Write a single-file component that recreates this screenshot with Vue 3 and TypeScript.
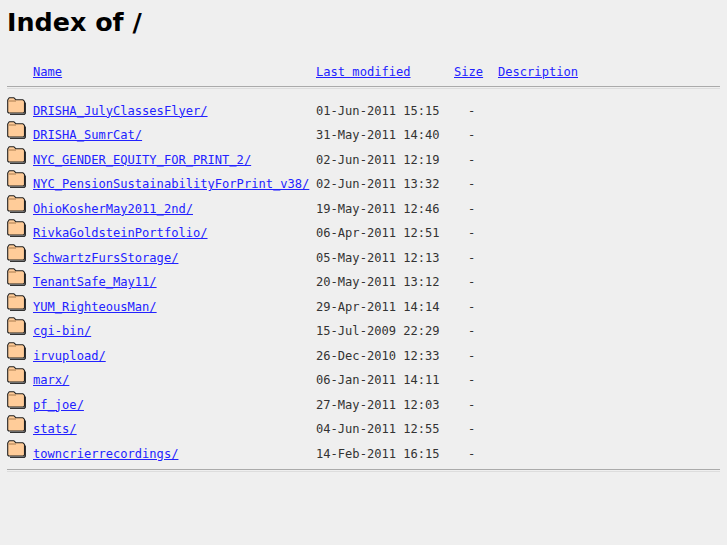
<script setup lang="ts">
const rows = [
  { name: 'DRISHA_JulyClassesFlyer/', modified: '01-Jun-2011 15:15' },
  { name: 'DRISHA_SumrCat/', modified: '31-May-2011 14:40' },
  { name: 'NYC_GENDER_EQUITY_FOR_PRINT_2/', modified: '02-Jun-2011 12:19' },
  { name: 'NYC_PensionSustainabilityForPrint_v38/', modified: '02-Jun-2011 13:32' },
  { name: 'OhioKosherMay2011_2nd/', modified: '19-May-2011 12:46' },
  { name: 'RivkaGoldsteinPortfolio/', modified: '06-Apr-2011 12:51' },
  { name: 'SchwartzFursStorage/', modified: '05-May-2011 12:13' },
  { name: 'TenantSafe_May11/', modified: '20-May-2011 13:12' },
  { name: 'YUM_RighteousMan/', modified: '29-Apr-2011 14:14' },
  { name: 'cgi-bin/', modified: '15-Jul-2009 22:29' },
  { name: 'irvupload/', modified: '26-Dec-2010 12:33' },
  { name: 'marx/', modified: '06-Jan-2011 14:11' },
  { name: 'pf_joe/', modified: '27-May-2011 12:03' },
  { name: 'stats/', modified: '04-Jun-2011 12:55' },
  { name: 'towncrierrecordings/', modified: '14-Feb-2011 16:15' },
];
</script>

<template>
  <div class="page">
    <h1>Index of /</h1>
    <div class="head">
      <a href="#" class="col-name">Name</a>
      <a href="#" class="col-date">Last modified</a>
      <a href="#" class="col-size">Size</a>
      <a href="#">Description</a>
    </div>
    <hr />
    <ul>
      <li v-for="row in rows" :key="row.name">
        <svg class="folder" width="19" height="18" viewBox="0 0 19 18">
          <path d="M3 17.5 H17.2 L18.6 16 V5.5" fill="none" stroke="#333" stroke-width="1.4" />
          <path d="M.7 3 L2.2 .8 H7 L9 2.8 H16 L17.5 4.3 V15 L16.5 16 H1.7 L.7 15 Z" fill="#ffcc99" stroke="#222" stroke-width="1.1" stroke-linejoin="round" />
          <path d="M1.6 4 H9" fill="none" stroke="#a87a4c" stroke-width="1" />
        </svg>
        <a href="#" class="col-name">{{ row.name }}</a>
        <span class="col-date">{{ row.modified }}</span>
        <span class="col-size">-</span>
      </li>
    </ul>
    <hr class="end" />
  </div>
</template>

<style scoped>
.page {
  padding: 8px 7px 0;
  font-family: "DejaVu Sans Mono", monospace;
  font-size: 12.08px;
  color: #333;
}

h1 {
  margin: 0;
  font-family: "DejaVu Sans", sans-serif;
  font-size: 25.4px;
  line-height: 28px;
  color: #000;
}

a {
  color: #2222ff;
}

.head {
  display: flex;
  margin-top: 28.5px;
  padding-left: 26px;
  height: 15px;
  line-height: 15px;
}

.col-name {
  width: 283px;
}

.col-date {
  width: 138px;
}

.col-size {
  width: 44px;
}

li .col-size {
  padding-left: 14px;
  width: auto;
}

hr {
  margin: 6.5px 0 0;
  height: 1px;
  border: 0;
  border-top: 1px solid #aaa;
  border-bottom: 1px solid #ddd;
}

hr.end {
  margin-top: 3px;
}

ul {
  list-style: none;
  margin: 0;
  padding: 9px 0 0;
}

li {
  display: flex;
  align-items: center;
  height: 24.5px;
  line-height: 15px;
}

li a,
li span {
  margin-top: 2px;
}

.folder {
  width: 19px;
  height: 18px;
  margin-right: 7px;
  margin-top: -9px;
  flex: none;
}
</style>

<style>
body {
  background: #efefef;
}
</style>
